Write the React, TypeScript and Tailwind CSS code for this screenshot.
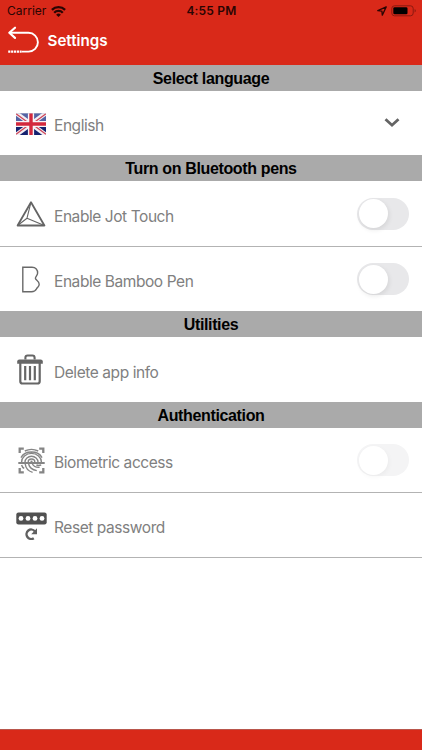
import type { ReactNode } from "react";

function BackIcon() {
  return (
    <svg className="h-[30px] w-[34px] shrink-0" viewBox="0 0 34 30" fill="none" stroke="#fff" strokeWidth="1.9">
      <path d="M2.5 6.8H21.5A9.4 9.4 0 0 1 21.5 25.6H14.5" />
      <path d="M8 1.7L2.3 6.8L8 11.9" strokeWidth="2.2" strokeLinecap="round" strokeLinejoin="round" />
      <path d="M1.2 25.6H14.5" strokeWidth="2.3" strokeDasharray="2.2 0.7" />
    </svg>
  );
}

function WifiIcon() {
  return (
    <svg className="ml-[5px] h-[11px] w-[15px]" viewBox="0 0 15 11" fill="none" stroke="#2a0503" strokeWidth="2.3">
      <path d="M0.9 3.9A9.4 9.4 0 0 1 14.1 3.9" />
      <path d="M3.2 6.7A6 6 0 0 1 11.8 6.7" />
      <path d="M7.5 10.9L5.1 8.7A3.4 3.4 0 0 1 9.9 8.7Z" fill="#2a0503" stroke="none" />
    </svg>
  );
}

function FlagIcon() {
  return (
    <svg className="mt-px h-[22px] w-[30px]" viewBox="0 0 30 22">
      <path d="M0 0H30V11H0Z" fill="#5363a4" />
      <path d="M0 11H30V22H0Z" fill="#152270" />
      <path d="M0 0L30 22M30 0L0 22" stroke="#f1eef3" strokeWidth="4.4" />
      <path d="M0 0.8L13 10.3M30 0.8L17 10.3M0 21.2L13 11.7M30 21.2L17 11.7" stroke="#cf4457" strokeWidth="1.3" />
      <path d="M15 0V22M0 11H30" stroke="#f7f4f7" strokeWidth="6.2" />
      <path d="M15 0V22M0 11H30" stroke="#d3283d" strokeWidth="3.4" />
      <path d="M0 0.3H30" stroke="#c5c8d8" strokeWidth="0.6" />
    </svg>
  );
}

function JotIcon() {
  return (
    <svg className="h-[26px] w-[30px]" viewBox="0 0 30 26" fill="none" stroke="#646464" strokeLinejoin="round">
      <path d="M15 1.2L28.4 24.5H1.6Z" strokeWidth="1.8" />
      <path d="M15 1.2L11 17.2L1.6 24.5M11 17.2L28.4 24.5" strokeWidth="1.1" />
    </svg>
  );
}

function BambooIcon() {
  return (
    <svg className="h-[27px] w-[20px]" viewBox="0 0 20 27" fill="none" stroke="#696969" strokeWidth="1.4">
      <path d="M1.8 1.2H11C14.7 1.2 16.9 3.8 16.6 7.2C16.4 9.4 14.4 10.6 14.4 12.2C14.4 14 18.2 14.8 18.2 18.3C18.2 20.8 16.5 21 15.6 22.7C14.6 24.7 13 25.7 10.5 25.7H1.8Z" />
    </svg>
  );
}

function TrashIcon() {
  return (
    <svg className="mr-[2px] h-[31px] w-[26px]" viewBox="0 0 26 31" fill="none" stroke="#666">
      <path d="M8.4 5.6V3.8Q8.4 1.5 10.6 1.5H15.4Q17.6 1.5 17.6 3.8V5.6" strokeWidth="2.1" />
      <path d="M0.2 9.8V7.6Q0.2 5.4 2.4 5.4H23.6Q25.8 5.4 25.8 7.6V9.8Z" fill="#666" stroke="none" />
      <path d="M3.3 9V27.2Q3.3 29.5 5.6 29.5H20.4Q22.7 29.5 22.7 27.2V9" strokeWidth="2.2" />
      <path d="M8.2 12V26.3M13 12V26.3M17.8 12V26.3" strokeWidth="2.2" />
    </svg>
  );
}

function FingerprintIcon() {
  return (
    <svg className="h-[27px] w-[27px]" viewBox="0 0 27 27" fill="none" stroke="#858585">
      <path d="M1.7 6V1.7H5.8M21.2 1.7H25.3V6M1.7 21V25.3H5.8M21.2 25.3H25.3V21" strokeWidth="2.3" />
      <path d="M0.3 16H26.7" strokeWidth="2" />
      <path
        d="M6.8 4Q13.5 0.8 20.2 4M3 10.6C7 3.2 20 3.2 24 10.6M3.6 15A9.9 8.6 0 0 1 23.4 15M7 15A6.5 5.8 0 0 1 20 15M10.2 15A3.3 3 0 0 1 16.8 15"
        strokeWidth="1.4"
      />
      <path d="M13.5 13.6V16" strokeWidth="2" />
      <path
        d="M3.6 18Q4.2 20.4 6.2 21.4M7.2 17Q8 23.4 14.6 25.4M10.6 17Q11.8 22.2 18.8 23.6M14.4 17Q16.2 20.6 21.6 20.2M18.4 17.8Q20 18.9 23.2 18"
        strokeWidth="1.4"
      />
    </svg>
  );
}

function PasswordIcon() {
  return (
    <svg className="h-[29px] w-[31px]" viewBox="0 0 31 29" fill="none">
      <rect x="0.3" y="1.4" width="30.4" height="12" rx="2.2" fill="#515151" />
      {[5, 12, 19, 26].map((x) => (
        <circle key={x} cx={x} cy="7.4" r="2.4" fill="#fff" />
      ))}
      <path d="M18.8 20.2A4.7 4.7 0 1 0 17.8 27.2" stroke="#606060" strokeWidth="2.4" />
      <path d="M21 17.2V23.2H15.2Z" fill="#606060" />
    </svg>
  );
}

function SectionTitle({ children }: { children: ReactNode }) {
  return (
    <h2 className="flex h-[26px] shrink-0 items-center justify-center bg-[#aaaaaa] pt-[2px] font-['Liberation_Sans',sans-serif] text-[16px] font-bold tracking-[-0.36px] text-black">
      {children}
    </h2>
  );
}

type RowProps = {
  icon: ReactNode;
  label: string;
  className: string;
  children?: ReactNode;
};

function Row({ icon, label, className, children }: RowProps) {
  return (
    <div className={`flex shrink-0 items-center pr-[13px] pl-[15px] ${className}`}>
      <span className="flex w-8 shrink-0 justify-center">{icon}</span>
      <span className="ml-[7px] pt-[6px] text-[15.5px] tracking-[-0.43px] text-[#808080]">{label}</span>
      <span className="ml-auto">{children}</span>
    </div>
  );
}

function Toggle({ label, disabled = false }: { label: string; disabled?: boolean }) {
  return (
    <button
      aria-checked={false}
      aria-label={label}
      className={`block h-[32px] w-[52px] rounded-full p-[1.5px] ${disabled ? "bg-[#f4f4f5]" : "bg-[#e8e8ea]"}`}
      disabled={disabled}
      role="switch"
    >
      <span
        className={`block size-[29px] rounded-full bg-white ${
          disabled ? "shadow-[1px_2px_5px_rgba(0,0,0,0.04)]" : "shadow-[1px_2px_5px_rgba(0,0,0,0.09)]"
        }`}
      />
    </button>
  );
}

export default function App() {
  return (
    <div className="flex h-[750px] w-[422px] flex-col overflow-hidden bg-white font-['Inter',sans-serif]">
      <header className="h-[65px] shrink-0 bg-[#d92919] text-[#2a0503]">
        <div className="grid h-[22px] grid-cols-3 items-center pr-[6px] pl-[7px] text-[12px] leading-none">
          <div className="flex items-center">
            <span className="text-[12px]">Carrier</span>
            <WifiIcon />
          </div>
          <span className="text-center text-[12px] font-semibold tracking-[0.2px]">4:55 PM</span>
          <div className="flex items-center justify-end gap-[4px]">
            <svg className="size-[10px]" viewBox="0 0 10 10" fill="none" stroke="#2a0503" strokeWidth="1.3" strokeLinejoin="round">
              <path d="M9.2 0.9L0.8 4.7L4.9 5.1L5.3 9.2Z" />
            </svg>
            <svg className="h-[12px] w-[25px]" viewBox="0 0 25 12">
              <rect x="0.8" y="0.8" width="21.4" height="10" rx="2.7" fill="none" stroke="#8b1a10" />
              <rect x="2.3" y="2.3" width="14.2" height="7" rx="1.3" fill="#000" />
              <path d="M23.6 4V7.6Q24.8 7 24.8 5.8Q24.8 4.6 23.6 4Z" fill="#8b1a10" />
            </svg>
          </div>
        </div>
        <div className="flex items-center pt-[4px] pl-[7px]">
          <BackIcon />
          <h1 className="ml-[6.5px] text-[15.2px] font-semibold text-white">Settings</h1>
        </div>
      </header>

      <main className="flex grow flex-col">
        <SectionTitle>Select language</SectionTitle>
        <Row icon={<FlagIcon />} label="English" className="h-16">
          <svg className="mr-[9px] h-[10px] w-[16px]" viewBox="0 0 16 10" fill="none" stroke="#646464" strokeWidth="2.8">
            <path d="M1.5 1.2L8 7.2L14.5 1.2" />
          </svg>
        </Row>

        <SectionTitle>Turn on Bluetooth pens</SectionTitle>
        <Row icon={<JotIcon />} label="Enable Jot Touch" className="h-[66px] border-b border-[#b3b3b3]">
          <Toggle label="Enable Jot Touch" />
        </Row>
        <Row icon={<BambooIcon />} label="Enable Bamboo Pen" className="h-[64px]">
          <Toggle label="Enable Bamboo Pen" />
        </Row>

        <SectionTitle>Utilities</SectionTitle>
        <Row icon={<TrashIcon />} label="Delete app info" className="h-[65px]" />

        <SectionTitle>Authentication</SectionTitle>
        <Row icon={<FingerprintIcon />} label="Biometric access" className="h-[65px] border-b border-[#b3b3b3]">
          <Toggle label="Biometric access" disabled />
        </Row>
        <Row icon={<PasswordIcon />} label="Reset password" className="h-[65px] border-b border-[#b3b3b3]" />
      </main>

      <footer className="h-[21px] shrink-0 border-t border-[#b9564c] bg-[#d92919]" />
    </div>
  );
}
